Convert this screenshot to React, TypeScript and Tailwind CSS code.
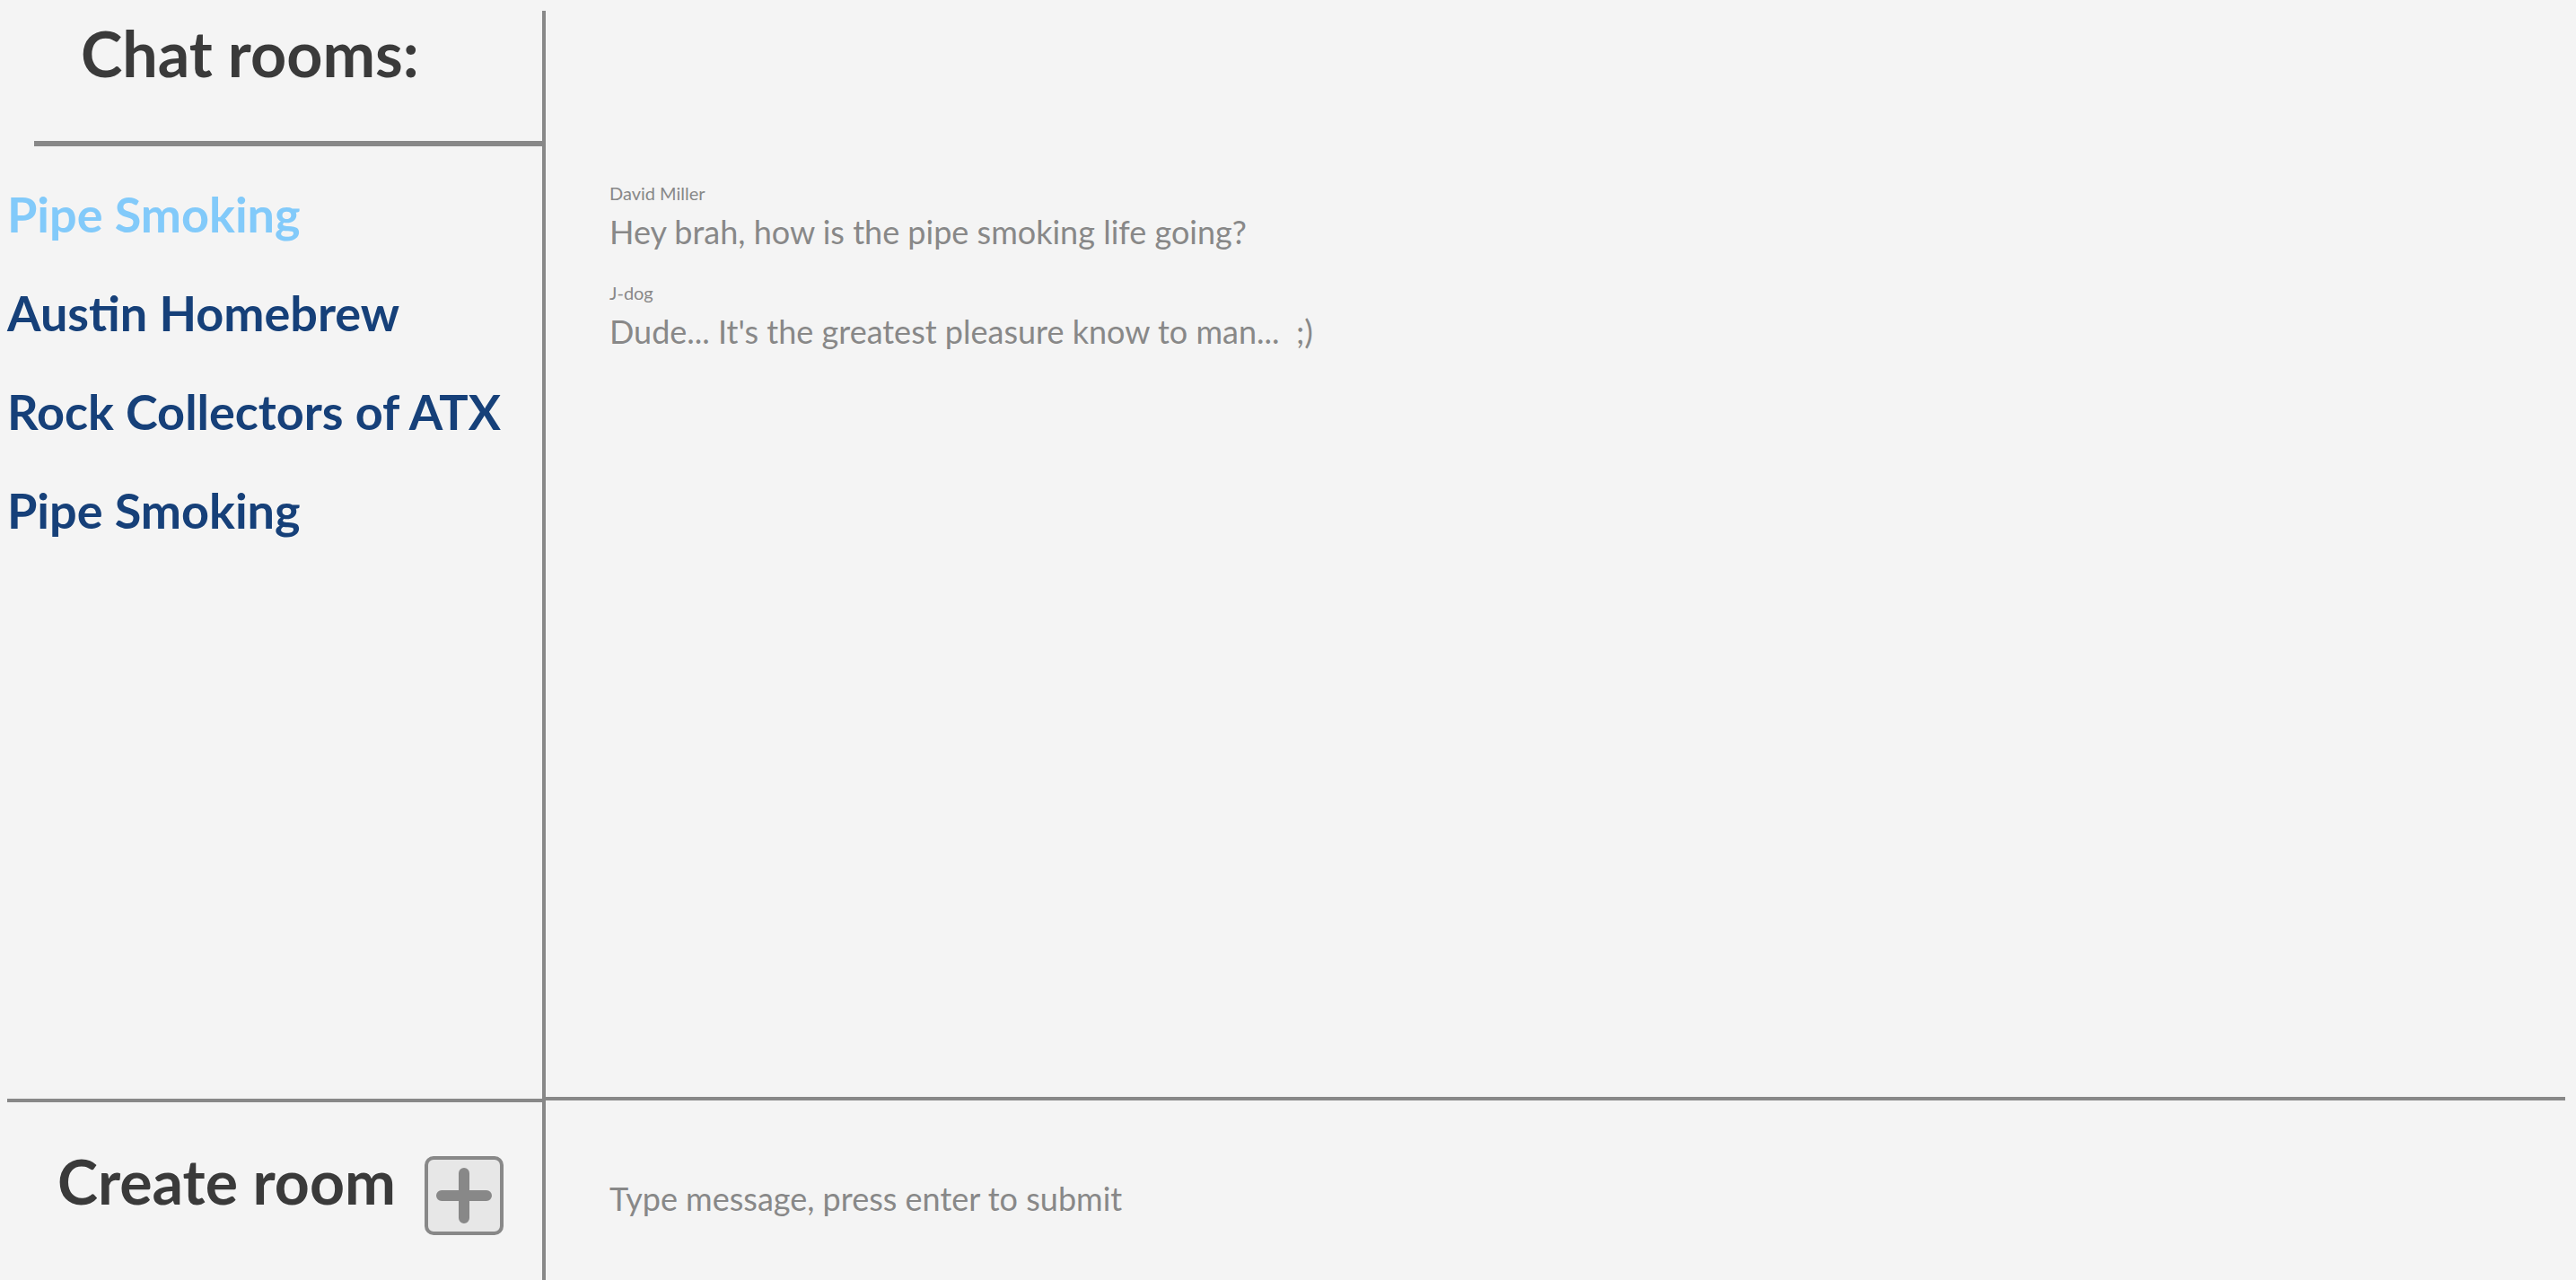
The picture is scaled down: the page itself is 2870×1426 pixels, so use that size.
import { useState } from "react";

const rooms = [
  { id: 1, name: "Pipe Smoking" },
  { id: 2, name: "Austin Homebrew" },
  { id: 3, name: "Rock Collectors of ATX" },
  { id: 4, name: "Pipe Smoking" },
];

const messages = [
  { id: 1, author: "David Miller", text: "Hey brah, how is the pipe smoking life going?" },
  { id: 2, author: "J-dog", text: "Dude... It's the greatest pleasure know to man...  ;)" },
];

const PlusButton: React.FC = () => (
  <button className="mt-[60px] flex h-[88px] w-[88px] items-center justify-center rounded-[10px] border-4 border-[#888] bg-[#e7e7e7]">
    <svg width="80" height="80" viewBox="0 0 80 80">
      <path
        d="M40 15V65M15 40H65"
        stroke="#888"
        strokeWidth="12"
        strokeLinecap="round"
        fill="none"
      />
    </svg>
  </button>
);

export default function App() {
  const [activeRoom, setActiveRoom] = useState(1);
  const [draft, setDraft] = useState("");

  return (
    <div className="flex h-[1426px] w-full overflow-hidden bg-[#f4f4f4] font-['Lato',sans-serif]">
      <aside className="mt-3 flex w-[608px] shrink-0 flex-col border-r-4 border-[#888]">
        <div className="ml-[38px] border-b-[6px] border-[#888] pb-[63px] pl-[52px] pt-3">
          <h1 className="text-[70px] font-bold leading-none text-[#3a3a3a]">Chat rooms:</h1>
        </div>

        <ul className="flex flex-1 flex-col gap-[56px] pl-2 pt-[49px]">
          {rooms.map((room) => (
            <li key={room.id}>
              <button
                onClick={() => setActiveRoom(room.id)}
                className={
                  room.id === activeRoom
                    ? "text-[54px] font-bold leading-none text-[#82cafa]"
                    : "text-[54px] font-bold leading-none text-[#164079]"
                }
              >
                {room.name}
              </button>
            </li>
          ))}
        </ul>

        <div className="ml-2 flex h-[202px] items-start gap-[32px] border-t-4 border-[#888] pl-[56px]">
          <h2 className="mt-[54px] text-[68px] font-bold leading-none text-[#3a3a3a]">Create room</h2>
          <PlusButton />
        </div>
      </aside>

      <main className="mr-3 flex flex-1 flex-col">
        <div className="flex-1 border-b-4 border-[#888] pl-[71px] pt-[205px]">
          {messages.map((m) => (
            <div key={m.id} className="mb-[40px]">
              <div className="mb-[15px] text-[20px] leading-none text-[#888]">{m.author}</div>
              <div className="whitespace-pre text-[36px] leading-none text-[#888]">{m.text}</div>
            </div>
          ))}
        </div>
        <div className="h-[200px] pl-[71px] pt-[87px]">
          <input
            value={draft}
            onChange={(e) => setDraft(e.target.value)}
            placeholder="Type message, press enter to submit"
            className="w-[1200px] bg-transparent text-[36px] leading-none text-[#555] outline-none placeholder:text-[#888]"
          />
        </div>
      </main>
    </div>
  );
}
